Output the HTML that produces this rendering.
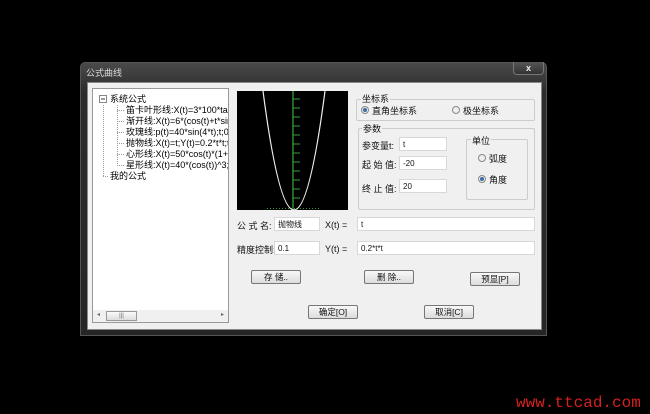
<!DOCTYPE html>
<html><head><meta charset="utf-8"><style>
*{margin:0;padding:0;box-sizing:border-box}
body{width:650px;height:414px;background:#000;position:relative;overflow:hidden;font-family:"Liberation Sans","Noto Sans CJK SC",sans-serif;font-size:9px;color:#111}
.a{position:absolute}
.frame{left:80px;top:62px;width:467px;height:274px;background:linear-gradient(#4a4a4a,#2c2c2c 30px,#262626);border:1px solid #555;border-radius:5px 5px 0 0}
.client{left:87px;top:82px;width:455px;height:248px;background:#f0f0f0;border:1px solid #888}
.title{left:86px;top:66px;color:#ddd;font-size:9px}
.close{left:513px;top:62px;width:31px;height:13px;background:linear-gradient(#555,#333);border:1px solid #777;border-top:none;border-radius:0 0 4px 4px;color:#eee;font-weight:bold;font-size:9px;text-align:center;line-height:12px}
.tree{left:92px;top:88px;width:137px;height:235px;background:#fff;border:1px solid #999;overflow:hidden}
.tree div{position:absolute;white-space:nowrap;font-size:9px;line-height:10px;color:#000}
.graph{left:237px;top:91px;width:111px;height:119px;background:#000}
.grp{border:1px solid #ccc;border-radius:2px}
.inp{background:#fff;border:1px solid #d8d8d8;height:14px;font-size:8px;padding-left:3px;line-height:13px}
.lbl{font-size:9px}
.btn{background:linear-gradient(#f8f8f8,#dcdcdc);border:1px solid #777;border-radius:2px;height:14px;text-align:center;font-size:8.5px;line-height:12px}
.rad{width:8px;height:8px;border-radius:50%;border:1px solid #888;background:#eee}
.rad.on::after{content:"";position:absolute;left:1px;top:1px;width:4px;height:4px;border-radius:50%;background:#3a6ea5}
</style></head><body>
<div class="a frame"></div>
<div class="a title">公式曲线</div>
<div class="a close">x</div>
<div class="a client"></div>

<div class="a tree">
<svg class="a" style="left:0;top:0" width="137" height="235"><g stroke="#999" stroke-dasharray="1,1" fill="none">
<line x1="10.5" y1="16" x2="10.5" y2="88"/><line x1="24.5" y1="16" x2="24.5" y2="77"/>
<line x1="24" y1="21.5" x2="32" y2="21.5"/><line x1="24" y1="32.5" x2="32" y2="32.5"/><line x1="24" y1="43.5" x2="32" y2="43.5"/><line x1="24" y1="54.5" x2="32" y2="54.5"/><line x1="24" y1="65.5" x2="32" y2="65.5"/><line x1="24" y1="76.5" x2="32" y2="76.5"/><line x1="10" y1="87.5" x2="16" y2="87.5"/></g>
<rect x="6.5" y="6.5" width="7" height="7" fill="#fff" stroke="#888"/><line x1="8" y1="10" x2="12" y2="10" stroke="#333"/></svg>
<div style="left:17px;top:5px">系统公式</div>
<div style="left:33px;top:16px">笛卡叶形线:X(t)=3*100*tan(t)</div>
<div style="left:33px;top:27px">渐开线:X(t)=6*(cos(t)+t*sin(t)</div>
<div style="left:33px;top:38px">玫瑰线:p(t)=40*sin(4*t);t;0;36</div>
<div style="left:33px;top:49px">抛物线:X(t)=t;Y(t)=0.2*t*t;t;-</div>
<div style="left:33px;top:60px">心形线:X(t)=50*cos(t)*(1+cos</div>
<div style="left:33px;top:71px">星形线:X(t)=40*(cos(t))^3;Y(t</div>
<div style="left:17px;top:82px">我的公式</div>
<div style="left:0;top:221px;width:135px;height:12px;background:#f0f0f0"></div>
<div style="left:4px;top:221px;color:#666;font-size:6px">◂</div>
<div style="left:13px;top:222px;width:31px;height:10px;background:linear-gradient(#fafafa,#ddd);border:1px solid #999;font-size:6px;text-align:center;line-height:8px;color:#666">|||</div>
<div style="left:128px;top:221px;color:#666;font-size:6px">▸</div>
</div>

<div class="a graph">
<svg width="111" height="119">
<line x1="56" y1="0" x2="56" y2="119" stroke="#2a8a2a" stroke-width="1.5"/>
<g stroke="#3c9a3c" stroke-width="1">
<line x1="56" y1="8" x2="63" y2="8"/><line x1="56" y1="17" x2="63" y2="17"/><line x1="56" y1="26" x2="63" y2="26"/><line x1="56" y1="35" x2="63" y2="35"/><line x1="56" y1="44" x2="63" y2="44"/><line x1="56" y1="53" x2="63" y2="53"/><line x1="56" y1="62" x2="63" y2="62"/><line x1="56" y1="71" x2="63" y2="71"/><line x1="56" y1="80" x2="63" y2="80"/><line x1="56" y1="89" x2="63" y2="89"/><line x1="56" y1="98" x2="63" y2="98"/><line x1="56" y1="107" x2="63" y2="107"/></g>
<line x1="30" y1="117.5" x2="84" y2="117.5" stroke="#3c9a3c" stroke-dasharray="1,2"/>
<path d="M26 0 Q57 238 88 0" stroke="#eee" stroke-width="1.2" fill="none"/>
</svg></div>

<div class="a grp" style="left:356px;top:99px;width:179px;height:22px"></div>
<div class="a lbl" style="left:361px;top:92px;background:#f0f0f0;padding:0 1px">坐标系</div>
<div class="a rad on" style="left:361px;top:106px"></div><div class="a lbl" style="left:372px;top:104px">直角坐标系</div>
<div class="a rad" style="left:452px;top:106px"></div><div class="a lbl" style="left:463px;top:104px">极坐标系</div>

<div class="a grp" style="left:358px;top:128px;width:177px;height:82px"></div>
<div class="a lbl" style="left:362px;top:122px;background:#f0f0f0;padding:0 1px">参数</div>
<div class="a grp" style="left:466px;top:139px;width:62px;height:61px"></div>
<div class="a lbl" style="left:471px;top:134px;background:#f0f0f0;padding:0 1px">单位</div>
<div class="a rad" style="left:478px;top:154px"></div><div class="a lbl" style="left:489px;top:152px">弧度</div>
<div class="a rad on" style="left:478px;top:175px"></div><div class="a lbl" style="left:489px;top:173px">角度</div>

<div class="a lbl" style="left:362px;top:139px">参变量t:</div><div class="a inp" style="left:399px;top:137px;width:48px">t</div>
<div class="a lbl" style="left:362px;top:158px">起 始 值:</div><div class="a inp" style="left:399px;top:156px;width:48px">-20</div>
<div class="a lbl" style="left:362px;top:182px">终 止 值:</div><div class="a inp" style="left:399px;top:179px;width:48px">20</div>

<div class="a lbl" style="left:237px;top:219px">公 式 名:</div><div class="a inp" style="left:274px;top:217px;width:46px">抛物线</div>
<div class="a lbl" style="left:325px;top:220px">X(t) =</div><div class="a inp" style="left:357px;top:217px;width:178px">t</div>
<div class="a lbl" style="left:237px;top:243px">精度控制:</div><div class="a inp" style="left:274px;top:241px;width:46px">0.1</div>
<div class="a lbl" style="left:325px;top:244px">Y(t) =</div><div class="a inp" style="left:357px;top:241px;width:178px">0.2*t*t</div>

<div class="a btn" style="left:251px;top:270px;width:50px">存 储..</div>
<div class="a btn" style="left:364px;top:270px;width:50px">删 除..</div>
<div class="a btn" style="left:470px;top:272px;width:50px">预显[P]</div>
<div class="a btn" style="left:308px;top:305px;width:50px">确定[O]</div>
<div class="a btn" style="left:424px;top:305px;width:50px">取消[C]</div>

<div class="a" style="left:516px;top:394px;color:#d42020;font-family:'Liberation Mono',monospace;font-size:16px">www.ttcad.com</div>
</body></html>
